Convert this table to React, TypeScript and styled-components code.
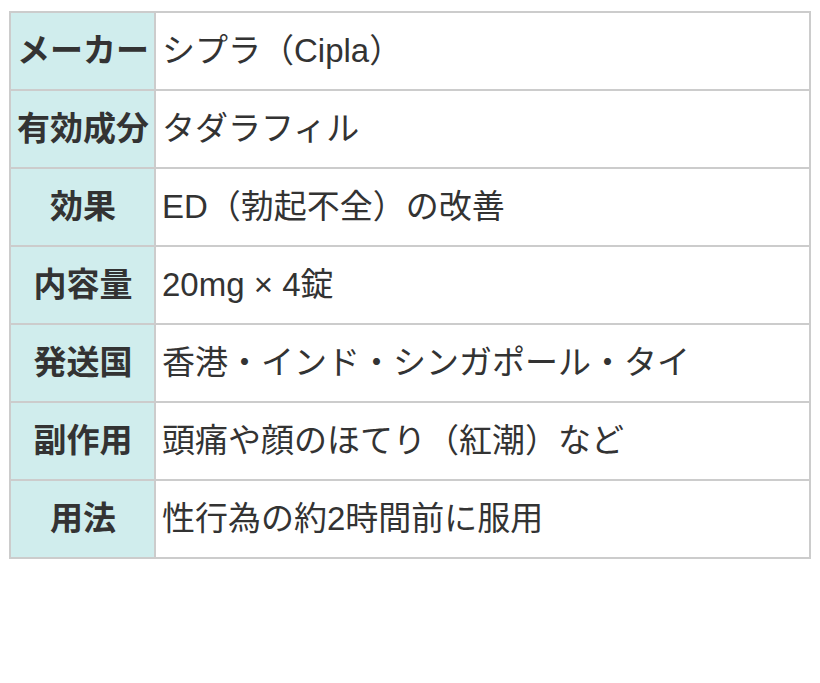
import React from "react";
import styled, { createGlobalStyle } from "styled-components";

const Global = createGlobalStyle`
  html, body { margin: 0; padding: 0; background: #fff; }
  body { font-family: "Liberation Sans", "Noto Sans CJK JP", sans-serif; color: #333; }
`;

const Page = styled.div`
  padding: 11px 9px 0 9px;
`;

const Table = styled.table`
  width: 100%;
  border-collapse: collapse;
  border: 2px solid #ccc;
  font-size: 33px;
  line-height: 1.5;
`;

const Row = styled.tr`
  height: 78px;
`;

const Head = styled.th`
  width: 1%;
  background: #d0eded;
  border: 2px solid #ccc;
  font-weight: bold;
  text-align: center;
  padding: 0 5px 0 6px;
  white-space: nowrap;
  color: #333;
`;

const Cell = styled.td`
  border: 2px solid #ccc;
  padding: 0 7px 0 6px;
  text-align: left;
  color: #333;
`;

const rows: [string, string][] = [
  ["メーカー", "シプラ（Cipla）"],
  ["有効成分", "タダラフィル"],
  ["効果", "ED（勃起不全）の改善"],
  ["内容量", "20mg × 4錠"],
  ["発送国", "香港・インド・シンガポール・タイ"],
  ["副作用", "頭痛や顔のほてり（紅潮）など"],
  ["用法", "性行為の約2時間前に服用"],
];

export default function App() {
  return (
    <>
      <Global />
      <Page>
        <Table>
          <tbody>
            {rows.map(([h, v]) => (
              <Row key={h}>
                <Head>{h}</Head>
                <Cell>{v}</Cell>
              </Row>
            ))}
          </tbody>
        </Table>
      </Page>
    </>
  );
}
